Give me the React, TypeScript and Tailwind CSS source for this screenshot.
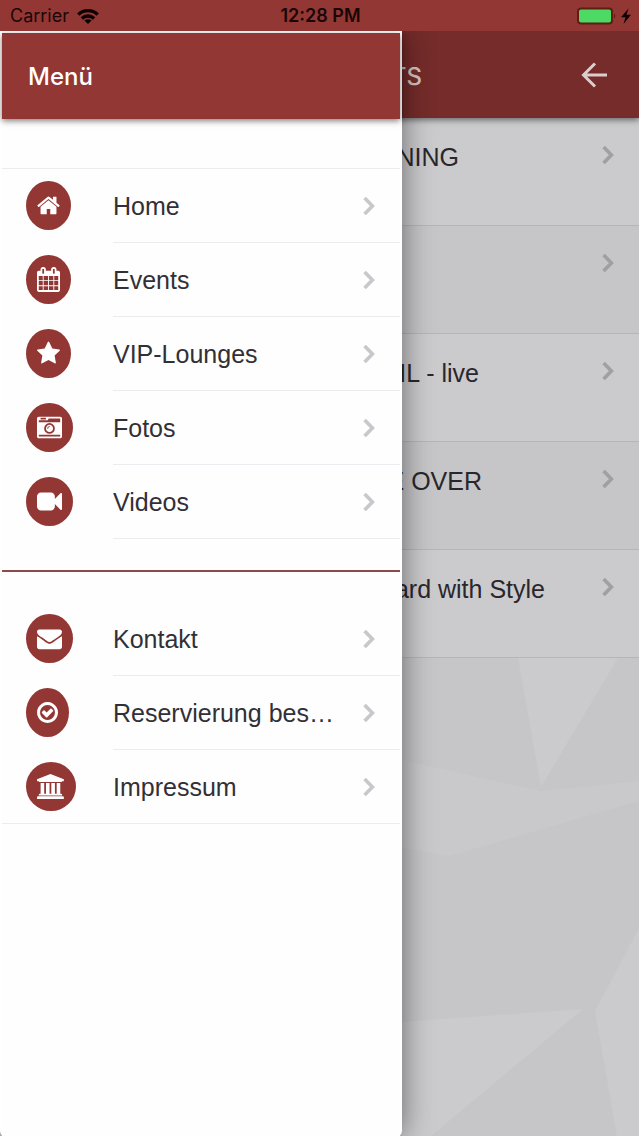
import React from "react";

type Icon = { viewBox: string; width: string; path: string };

const icons: Record<string, Icon> = {
  home: {
    viewBox: "64 0 1664 1792",
    width: "w-[23px]",
    path: "M1472 992v480q0 26-19 45t-45 19h-384v-384h-256v384h-384q-26 0-45-19t-19-45v-480q0-1 .5-3t.5-3l575-474 575 474q1 2 1 6zm223-69l-62 74q-8 9-21 11h-3q-13 0-21-7l-692-577-692 577q-12 8-24 7-13-2-21-11l-62-74q-8-10-7-23.5t11-21.5l719-599q32-26 76-26t76 26l244 204v-195q0-14 9-23t23-9h192q14 0 23 9t9 23v408l219 182q10 8 11 21.5t-7 23.5z",
  },
  calendar: {
    viewBox: "64 0 1664 1792",
    width: "w-[23px]",
    path: "M192 1664h288v-288h-288v288zm352 0h320v-288h-320v288zm-352-352h288v-320h-288v320zm352 0h320v-320h-320v320zm-352-384h288v-288h-288v288zm736 736h320v-288h-320v288zm-384-736h320v-288h-320v288zm768 736h288v-288h-288v288zm-384-352h320v-320h-320v320zm-352-864v-288q0-13-9.5-22.5t-22.5-9.5h-64q-13 0-22.5 9.5t-9.5 22.5v288q0 13 9.5 22.5t22.5 9.5h64q13 0 22.5-9.5t9.5-22.5zm736 864h288v-320h-288v320zm-384-384h320v-288h-320v288zm384 0h288v-288h-288v288zm32-480v-288q0-13-9.5-22.5t-22.5-9.5h-64q-13 0-22.5 9.5t-9.5 22.5v288q0 13 9.5 22.5t22.5 9.5h64q13 0 22.5-9.5t9.5-22.5zm384-64v1280q0 52-38 90t-90 38h-1408q-52 0-90-38t-38-90v-1280q0-52 38-90t90-38h128v-96q0-66 47-113t113-47h64q66 0 113 47t47 113v96h384v-96q0-66 47-113t113-47h64q66 0 113 47t47 113v96h128q52 0 90 38t38 90z",
  },
  star: {
    viewBox: "64 0 1664 1792",
    width: "w-[23px]",
    path: "M1728 647q0 22-26 48l-363 354 86 500q1 7 1 20 0 21-10.5 35.5t-30.5 14.5q-19 0-40-12l-449-236-449 236q-22 12-40 12-21 0-31.5-14.5t-10.5-35.5q0-6 2-20l86-500-364-354q-25-27-25-48 0-37 56-46l502-73 225-455q19-41 49-41t49 41l225 455 502 73q56 9 56 46z",
  },
  camera: {
    viewBox: "0 0 1792 1792",
    width: "w-[25px]",
    path: "M928 832q0-14-9-23t-23-9q-66 0-113 47t-47 113q0 14 9 23t23 9 23-9 9-23q0-40 28-68t68-28q14 0 23-9t9-23zm224 130q0 106-75 181t-181 75-181-75-75-181 75-181 181-75 181 75 75 181zm-1024 574h1536v-128h-1536v128zm1152-574q0-159-112.5-271.5t-271.5-112.5-271.5 112.5-112.5 271.5 112.5 271.5 271.5 112.5 271.5-112.5 112.5-271.5zm-1024-642h384v-128h-384v128zm-128 192h1536v-256h-828l-64 128h-644v128zm1664-256v1280q0 53-37.5 90.5t-90.5 37.5h-1536q-53 0-90.5-37.5t-37.5-90.5v-1280q0-53 37.5-90.5t90.5-37.5h1536q53 0 90.5 37.5t37.5 90.5z",
  },
  video: {
    viewBox: "0 0 1792 1792",
    width: "w-[25px]",
    path: "M1792 352v1088q0 42-39 59-13 5-25 5-27 0-45-19l-403-403v166q0 119-84.5 203.5t-203.5 84.5h-704q-119 0-203.5-84.5t-84.5-203.5v-704q0-119 84.5-203.5t203.5-84.5h704q119 0 203.5 84.5t84.5 203.5v165l403-402q18-19 45-19 12 0 25 5 39 17 39 59z",
  },
  envelope: {
    viewBox: "0 0 1792 1792",
    width: "w-[25px]",
    path: "M1792 710v794q0 66-47 113t-113 47h-1472q-66 0-113-47t-47-113v-794q44 49 101 87 362 246 497 345 57 42 92.5 65.5t94.5 48 110 24.5h2q51 0 110-24.5t94.5-48 92.5-65.5q170-123 498-345 57-39 100-87zm0-294q0 79-49 151t-122 123q-376 261-468 325-10 7-42.5 31t-54 38.5-52 32.5-57.5 27-50 9h-2q-23 0-50-9t-57.5-27-52-32.5-54-38.5-42.5-31q-91-64-262-182.5t-205-142.5q-62-42-117-115.5t-55-136.5q0-78 41.5-130t118.5-52h1472q65 0 112.5 47t47.5 113z",
  },
  check: {
    viewBox: "128 0 1536 1792",
    width: "w-[21px]",
    path: "M1299 813l-422 422q-19 19-45 19t-45-19l-294-294q-19-19-19-45t19-45l102-102q19-19 45-19t45 19l147 147 275-275q19-19 45-19t45 19l102 102q19 19 19 45t-19 45zm141 83q0-148-73-273t-198-198-273-73-273 73-198 198-73 273 73 273 198 198 273 73 273-73 198-198 73-273zm224 0q0 209-103 385.5t-279.5 279.5-385.5 103-385.5-103-279.5-279.5-103-385.5 103-385.5 279.5-279.5 385.5-103 385.5 103 279.5 279.5 103 385.5z",
  },
  university: {
    viewBox: "0 0 2000 1792",
    width: "w-[28px]",
    path: "M960 0l960 384v128h-128q0 26-20.5 45t-48.5 19h-1526q-28 0-48.5-19t-20.5-45h-128v-128zM256 640h256v768h128v-768h256v768h128v-768h256v768h128v-768h256v768h59q28 0 48.5 19t20.5 45v64h-1664v-64q0-26 20.5-45t48.5-19h59zM1851 1600q28 0 48.5 19t20.5 45v128h-1920v-128q0-26 20.5-45t48.5-19z",
  },
};

const mainLinks = [
  { label: "Home", icon: icons.home },
  { label: "Events", icon: icons.calendar },
  { label: "VIP-Lounges", icon: icons.star },
  { label: "Fotos", icon: icons.camera },
  { label: "Videos", icon: icons.video },
];

const infoLinks = [
  { label: "Kontakt", icon: icons.envelope },
  { label: "Reservierung bes…", icon: icons.check },
  { label: "Impressum", icon: icons.university },
];

const events = [
  { title: "NING", width: "w-[459px]" },
  { title: "", width: "w-[459px]" },
  { title: "IL - live", width: "w-[479px]" },
  { title: "E OVER", width: "w-[482px]" },
  { title: "ard with Style", width: "w-[545px]" },
];

const Chevron = ({ className }: { className: string }) => (
  <svg viewBox="0 0 12 20" fill="none" stroke="currentColor" strokeWidth="3.6" className={`h-5 w-3 shrink-0 ${className}`}>
    <path d="M1.600 2 9.400 10l-7.800 8" />
  </svg>
);

const StatusBar = () => (
  <div className="grid h-[31px] grid-cols-3 items-center bg-[#933734] pl-[10px] pr-2 font-[Inter,sans-serif] text-lg text-[#1a0606]">
    <div className="flex items-center gap-2">
      <span>Carrier</span>
      <svg viewBox="0 0 22 16" className="h-4 w-[22px]" fill="none" stroke="#0c0202" strokeWidth="3.4">
        <path d="M1.200 6.400a14.500 14.500 0 0 1 19.600 0" />
        <path d="M4.900 10.400a9 9 0 0 1 12.200 0" />
        <path d="M11 16 7.400 12.600a5.200 5.200 0 0 1 7.200 0z" fill="#0c0202" stroke="none" />
      </svg>
    </div>
    <span className="text-center font-semibold">12:28 PM</span>
    <svg viewBox="0 0 54 18" className="h-[18px] w-[54px] justify-self-end">
      <rect x="1" y="1.500" width="34" height="15" rx="3" fill="#4cd964" stroke="#5f1d12" strokeWidth="2" />
      <path d="M37 6.500q2.500 2.500 0 5z" fill="#5f1d12" />
      <path d="M51.500 1.500 44 10.200h4.500L46.500 17 54 7.800h-4.500z" fill="#0c0202" />
    </svg>
  </div>
);

const MenuList = ({ links }: { links: typeof mainLinks }) => (
  <ul>
    {links.map((link) => (
      <li key={link.label}>
        <a href="#" className="flex h-[74px] items-stretch pl-6">
          <span className="flex w-[87px] shrink-0 items-center pb-0.5">
            <span className="flex h-[49px] items-center rounded-[50%] bg-[#933734] px-[11px]">
              <svg viewBox={link.icon.viewBox} fill="#fff" className={`h-[25px] ${link.icon.width}`}>
                <path d={link.icon.path} />
              </svg>
            </span>
          </span>
          <span className="flex min-w-0 flex-1 items-center justify-between border-b border-[#ececf0] pr-[25px]">
            <span className="truncate text-[25px] leading-8 text-[#323036]">{link.label}</span>
            <Chevron className="text-[#c7c7cc]" />
          </span>
        </a>
      </li>
    ))}
  </ul>
);

const App = () => {
  return (
    <div className="flex min-h-screen flex-col font-['Liberation_Sans',Arial,sans-serif]">
      <StatusBar />
      <div className="relative flex flex-1 flex-col overflow-hidden bg-[#c6c5c8]">
        <header className="z-10 flex h-[87px] shrink-0 items-center justify-between bg-[#752c2a] pr-8 shadow-[0_2px_6px_rgba(0,0,0,0.5)]">
          <h2 className="w-[422px] pt-1 text-right font-[Inter,sans-serif] text-2xl font-medium text-[#d5c5c2]">TS</h2>
          <button type="button" aria-label="Zurück">
            <svg viewBox="0 0 26 26" className="h-[26px] w-[26px]" fill="none" stroke="#dacfcc" strokeWidth="3">
              <path d="M26 13H3M14 1.500 2.500 13 14 24.500" />
            </svg>
          </button>
        </header>
        <ul>
          {events.map((event, index) => (
            <li key={index} className="border-b border-[#b6b5b8] odd:bg-[#cbcacd]">
              <a href="#" className="flex h-[107px] items-start justify-between pr-[25px] pt-[23px]">
                <span className={`text-right text-[25px] leading-8 text-[#29272b] ${event.width}`}>{event.title}</span>
                <span className="flex h-7 items-center">
                  <Chevron className="text-[#a09fa3]" />
                </span>
              </a>
            </li>
          ))}
        </ul>
        <div className="flex min-h-0 flex-1">
          <svg viewBox="0 0 639 479" preserveAspectRatio="none" fill="#cbcacd" className="h-[479px] w-full">
            <path d="M518 0h100l-77 129z" />
            <path d="M402 102 540 133 639 123v20L450 198l-48-8z" fill="#c9c8cb" />
            <path d="M639 270 595 353 617 479h22z" />
            <path d="M402 364 583 351 430 479h-28z" />
          </svg>
        </div>

        <nav className="absolute inset-y-0 left-0 z-20 w-[402px] max-w-full rounded-b-md border-x-2 border-t-2 border-white bg-[#fefefe] shadow-[0_0_30px_rgba(0,0,0,0.5)]">
          <div className="flex h-[86px] items-center bg-[#933734] pl-[26px] pt-0.5 shadow-[0_2px_6px_rgba(0,0,0,0.5)]">
            <h1 className="font-[Inter,sans-serif] text-2xl font-medium text-white">Menü</h1>
          </div>
          <div className="mt-[49px] border-t border-[#ececf0]">
            <MenuList links={mainLinks} />
          </div>
          <hr className="mb-[30px] mt-[31px] border-t-2 border-[#8d4a4a]" />
          <MenuList links={infoLinks} />
          <hr className="-mt-px w-[111px] border-[#ececf0]" />
        </nav>
      </div>
    </div>
  );
};

export default App;
